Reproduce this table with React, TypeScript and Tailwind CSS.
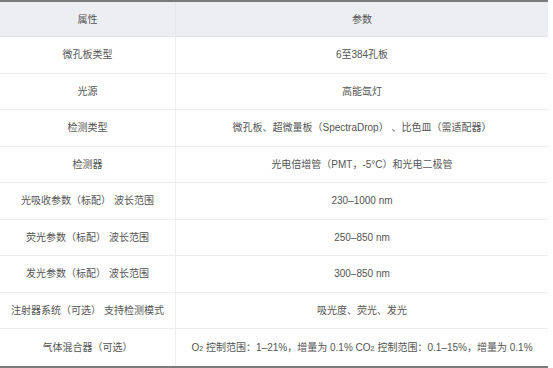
import React from "react";

const Sub = () => <span className="text-[7px] relative top-[2px] mr-[3px]">2</span>;

const rows: [string, React.ReactNode][] = [
  ["微孔板类型", "6至384孔板"],
  ["光源", "高能氙灯"],
  ["检测类型", "微孔板、超微量板（SpectraDrop） 、比色皿（需适配器）"],
  ["检测器", "光电倍增管（PMT，-5°C）和光电二极管"],
  ["光吸收参数（标配） 波长范围", "230–1000 nm"],
  ["荧光参数（标配） 波长范围", "250–850 nm"],
  ["发光参数（标配） 波长范围", "300–850 nm"],
  ["注射器系统（可选） 支持检测模式", "吸光度、荧光、发光"],
  [
    "气体混合器（可选）",
    <>
      O<Sub />控制范围：1–21%，增量为 0.1% CO<Sub />控制范围：0.1–15%，增量为 0.1%
    </>,
  ],
];

export default function App() {
  return (
    <div
      className="w-[553px] h-[368px] bg-white overflow-hidden"
      style={{ fontFamily: '"Liberation Sans", "Noto Sans CJK SC", sans-serif' }}
    >
      <div className="w-[548px] border-t-2 border-b-2 border-[#7a7a7a] text-[10px] text-[#555]">
        <div className="flex h-[35px] bg-[#eceef2] border-b border-[#e4e6ea]">
          <div className="w-[176px] flex items-center justify-center border-r border-[#e4e6ea]">属性</div>
          <div className="flex-1 flex items-center justify-center">参数</div>
        </div>
        {rows.map(([k, v], i) => (
          <div
            key={i}
            className={`flex h-[36.5px] ${i < rows.length - 1 ? "border-b border-[#ececec]" : ""}`}
          >
            <div className="w-[176px] flex items-center justify-center border-r border-[#efefef]">{k}</div>
            <div className="flex-1 flex items-center justify-center whitespace-nowrap">{v}</div>
          </div>
        ))}
      </div>
    </div>
  );
}
